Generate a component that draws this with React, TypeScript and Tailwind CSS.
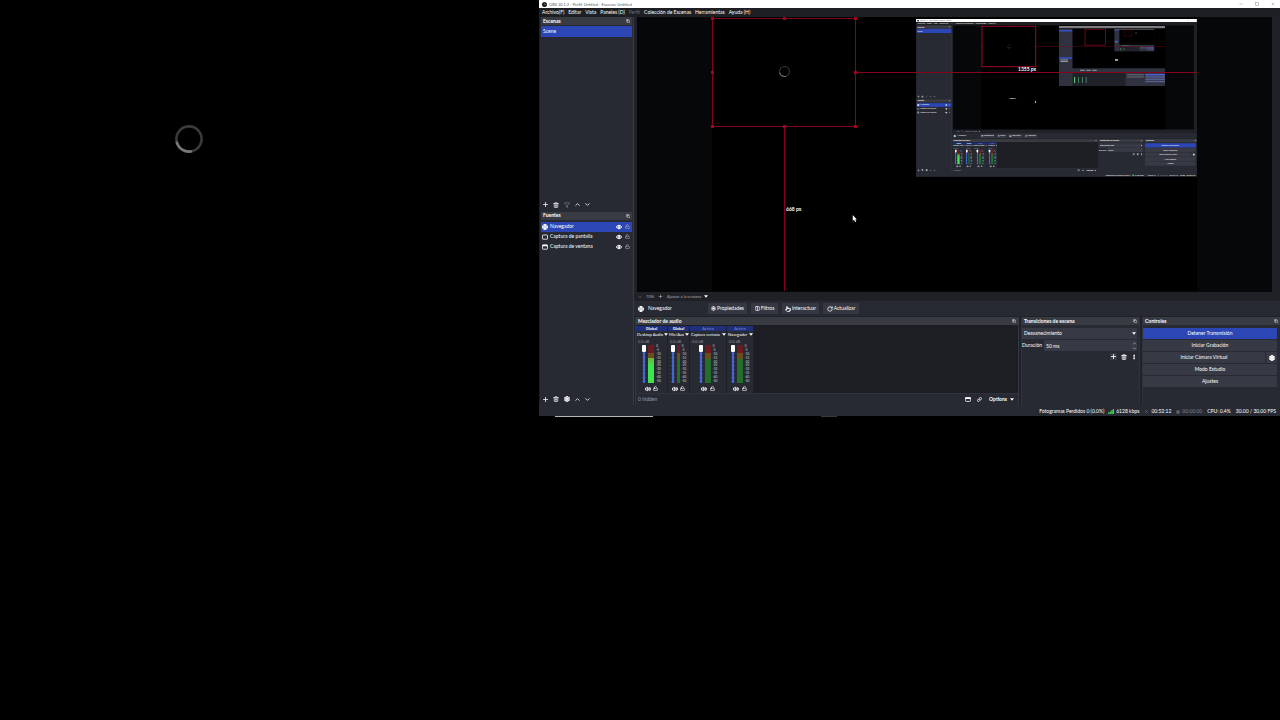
import {
  ChevronDown,
  ChevronUp,
  Columns2,
  Copy,
  Eye,
  Filter,
  Globe,
  Link,
  LockOpen,
  Minus,
  MoreVertical,
  Plus,
  Pointer,
  RotateCw,
  Settings,
  Square,
  Trash2,
  Volume2,
  X,
} from "lucide-react";
import type { ReactNode } from "react";

const menus = [
  "Archivo(F)",
  "Editar",
  "Vista",
  "Paneles (D)",
  "Perfil",
  "Colección de Escenas",
  "Herramientas",
  "Ayuda (H)",
];

const sources = [
  { name: "Navegador", kind: "browser", active: true },
  { name: "Captura de pantalla", kind: "display", active: false },
  { name: "Captura de ventana", kind: "window", active: false },
];

const channels = [
  { scope: "Global", name: "Desktop Audio", db: "0.0 dB", width: "w-8", meter: "w-[6px]", level: 72 },
  { scope: "Global", name: "Mic/Aux", db: "0.0 dB", width: "w-[22px]", meter: "w-[3px]", level: 0 },
  { scope: "Activo", name: "Captura ventana", db: "0.0 dB", width: "w-[37px]", meter: "w-[6px]", level: 0 },
  { scope: "Activo", name: "Navegador", db: "0.0 dB", width: "w-[27px]", meter: "w-[6px]", level: 0 },
];

const scale = ["0", "-5", "-10", "-15", "-20", "-25", "-30", "-35", "-40", "-50"];

function Spinner({ className }: { className: string }) {
  return (
    <svg viewBox="0 0 28 28" fill="none" strokeWidth="2.6" className={className}>
      <circle cx="14" cy="14" r="12.6" stroke="#3a3a3a" />
      <path d="M1.600 16.500A12.600 12.600 0 0 0 17 26.200" stroke="#777" />
    </svg>
  );
}

function DockHeader({ title }: { title: string }) {
  return (
    <div className="flex h-2 shrink-0 items-center justify-between bg-[#393b43] px-[2px]">
      <h2 className="font-bold text-white">{title}</h2>
      <button type="button" aria-label={`Desacoplar ${title}`}>
        <Copy size={4} strokeWidth={3} />
      </button>
    </div>
  );
}

function IconButton({ label, children }: { label: string; children: ReactNode }) {
  return (
    <button type="button" aria-label={label} className="flex size-[7px] items-center justify-center">
      {children}
    </button>
  );
}

function ListTools({ third }: { third: ReactNode }) {
  return (
    <div className="mt-auto flex h-3 items-center gap-[3px] px-px text-[#e4e5e8]">
      <IconButton label="Añadir">
        <Plus size={7} strokeWidth={3} />
      </IconButton>
      <IconButton label="Eliminar">
        <Trash2 size={6} strokeWidth={3} />
      </IconButton>
      <div className="mx-px flex">
        <IconButton label="Opciones">{third}</IconButton>
      </div>
      <IconButton label="Subir">
        <ChevronUp size={7} strokeWidth={3} />
      </IconButton>
      <IconButton label="Bajar">
        <ChevronDown size={7} strokeWidth={3} />
      </IconButton>
    </div>
  );
}

function SourceIcon({ kind }: { kind: string }) {
  if (kind === "browser") {
    return <Globe size={6} strokeWidth={4} />;
  }
  return (
    <svg viewBox="0 0 6 6" className="size-[6px]">
      <rect x="0.5" y="1" width="5" height="4.2" rx="0.5" fill="none" stroke="white" strokeWidth="0.8" />
      {kind === "window" && <rect x="0.5" y="0.7" width="5" height="1.6" fill="white" />}
    </svg>
  );
}

function LeftDocks() {
  return (
    <aside className="flex w-[95px] shrink-0 flex-col border-l border-r border-l-[#1e1f22] border-r-[#3a3c44] bg-[#272a33]">
      <section className="flex flex-1 flex-col px-px">
        <DockHeader title="Escenas" />
        <ul className="mt-px">
          <li className="flex h-[11px] items-center bg-[#2c46b5] px-[2px] text-white">Scene</li>
        </ul>
        <ListTools third={<Filter size={6} strokeWidth={2} color="#9a9ca3" />} />
      </section>
      <section className="flex flex-1 flex-col px-px pt-px">
        <DockHeader title="Fuentes" />
        <ul className="mt-[2px]">
          {sources.map((source) => (
            <li
              key={source.name}
              className={`flex h-[10px] items-center gap-[2px] px-px text-white ${source.active ? "bg-[#2c46b5]" : ""}`}
            >
              <SourceIcon kind={source.kind} />
              <span className="flex-1">{source.name}</span>
              <IconButton label={`Mostrar ${source.name}`}>
                <Eye size={6} strokeWidth={4} />
              </IconButton>
              <IconButton label={`Bloquear ${source.name}`}>
                <LockOpen size={5} strokeWidth={3} color="#a0a2aa" />
              </IconButton>
            </li>
          ))}
        </ul>
        <ListTools third={<Settings size={6} strokeWidth={5} />} />
      </section>
    </aside>
  );
}

// Text-free window for the captures that are too small to read.
function MiniWindow({ nested }: { nested: boolean }) {
  return (
    <div className="flex h-[158px] w-[280px] flex-col bg-[#30333f]">
      <div className="h-1 bg-[#c4c4c4]" />
      <div className="h-[3px] bg-[#25262b]" />
      <div className="flex flex-1">
        <div className="flex w-9 flex-col gap-[2px] pt-[3px]">
          <div className="h-1 bg-[#3450c8]" />
          <div className="mt-[66px] h-1 bg-[#3450c8]" />
          <div className="ml-1 h-[2px] w-5 bg-[#b9bac0]" />
          <div className="ml-1 h-[2px] w-5 bg-[#b9bac0]" />
        </div>
        <div className="flex flex-1 flex-col">
          <div className="flex h-[104px] justify-between bg-black pl-8 pr-7">
            <div className="h-11 w-[56px] border-2 border-[#8a0620]" />
            <div className="flex flex-col items-end">
              {nested && (
                <div className="h-[60px] w-[106px] overflow-hidden">
                  <div className="h-[158px] w-[280px] origin-top-left scale-[0.379]">
                    <MiniWindow nested={false} />
                  </div>
                </div>
              )}
              <div className="mr-[96px] mt-5 h-1 w-2 bg-[#d0d0d0]" />
            </div>
          </div>
          <div className="mt-1 flex gap-1 pl-5">
            <span className="h-[3px] w-3 bg-[#8d8f97]" />
            <span className="h-[3px] w-3 bg-[#8d8f97]" />
            <span className="h-[3px] w-3 bg-[#8d8f97]" />
          </div>
          <div className="mt-1 flex flex-1 gap-1">
            <div className="flex flex-1 gap-2 bg-[#202229] px-1 pt-3">
              <span className="h-4 w-[3px] bg-[#4fcf6a]" />
              <span className="h-4 w-[2px] bg-[#5c8f78]" />
              <span className="h-4 w-[2px] bg-[#5c8f78]" />
              <span className="h-4 w-[2px] bg-[#5c8f78]" />
            </div>
            <div className="flex w-11 flex-col gap-[2px] pt-1">
              <span className="h-1 bg-[#565966]" />
              <span className="h-1 bg-[#565966]" />
            </div>
            <div className="flex w-[52px] flex-col gap-[2px] pt-1">
              <span className="h-1 bg-[#4a62d8]" />
              <span className="h-1 bg-[#565e90]" />
              <span className="h-1 bg-[#565e90]" />
              <span className="h-1 bg-[#565e90]" />
            </div>
          </div>
        </div>
      </div>
    </div>
  );
}

const handles = [
  "-left-[2px] -top-[2px]",
  "left-[70px] -top-[2px]",
  "-right-[2px] -top-[2px]",
  "-left-[2px] top-[52px]",
  "-right-[2px] top-[52px]",
  "-left-[2px] -bottom-[2px]",
  "left-[70px] -bottom-[2px]",
  "-right-[2px] -bottom-[2px]",
];

// Free canvas: the selected browser source, its guides and the captured window.
function Preview({ depth }: { depth: number }) {
  return (
    <div className="flex h-[275px] justify-center overflow-hidden bg-[#050709]">
      <div className="relative h-[274px] w-[485px] bg-black">
        <div className="absolute right-0 top-[2px] h-[158px] w-[281px] overflow-hidden" inert>
          {depth === 0 ? (
            <div className="h-[416px] w-[741px] origin-top-left scale-[0.379]">
              <StudioWindow depth={depth + 1} />
            </div>
          ) : (
            <MiniWindow nested />
          )}
        </div>
        <div className={`absolute left-0 top-px h-[109px] w-36 ${depth === 0 ? "border border-[#85041c]" : "border-2 border-[#d00834]"}`}>
          {handles.map((place) => (
            <span key={place} className={`absolute size-[3px] bg-[#9c0620] ${place}`} />
          ))}
          <Spinner className="absolute left-[66px] top-[47px] size-[11px]" />
        </div>
        <div className="absolute left-36 right-0 top-[55px] h-px bg-[#85041c]" />
        {depth === 0 && <div className="absolute bottom-0 left-[72px] top-[110px] w-px bg-[#85041c]" />}
        {depth === 0 && <span className="absolute left-[306px] top-[49px] font-bold text-white">1355 px</span>}
        <span className="absolute left-[74px] top-[189px] font-bold text-white">668 px</span>
        <svg viewBox="0 0 8 12" className="absolute left-[140px] top-[198px] h-[7px] w-[5px]">
          <path d="M1 0v10l2.300-2 1.700 4 2-1-1.700-3.500H8z" fill="white" />
        </svg>
      </div>
    </div>
  );
}

function ToolButton({ icon, label, className }: { icon: ReactNode; label: string; className: string }) {
  return (
    <button
      type="button"
      className={`flex h-[11px] items-center justify-center gap-px rounded-[1px] bg-[#353842] text-white ${className}`}
    >
      {icon}
      {label}
    </button>
  );
}

function SourceBar() {
  return (
    <>
      <div className="flex h-[9px] items-center bg-[#202127] pl-[2px] text-[4px] text-[#a7a9b0]">
        <IconButton label="Alejar">
          <Minus size={4} />
        </IconButton>
        <span className="w-[14px] text-center">70%</span>
        <IconButton label="Acercar">
          <Plus size={5} strokeWidth={3} />
        </IconButton>
        <span className="ml-[3px] w-[37px] whitespace-nowrap">Ajustar a la ventana</span>
        <Caret />
      </div>
      <div className="flex h-[15px] items-center bg-[#272a33] pl-1 text-white">
        <Globe size={6} strokeWidth={4} />
        <span className="ml-1 w-[60px]">Navegador</span>
        <div className="flex gap-1">
          <ToolButton className="w-[39px]" label="Propiedades" icon={<Settings size={5} strokeWidth={4} />} />
          <ToolButton className="w-[27px]" label="Filtros" icon={<Columns2 size={5} strokeWidth={3} />} />
          <ToolButton className="w-[37px]" label="Interactuar" icon={<Pointer size={6} strokeWidth={3} />} />
          <ToolButton className="w-[36px]" label="Actualizar" icon={<RotateCw size={6} strokeWidth={3} />} />
        </div>
      </div>
    </>
  );
}

function Caret() {
  return (
    <svg viewBox="0 0 4 3" className="h-[3px] w-1 shrink-0">
      <path d="M0 0.300h4L2 2.800z" fill="white" />
    </svg>
  );
}

function Channel({ channel }: { channel: (typeof channels)[number] }) {
  return (
    <div className={`flex shrink-0 flex-col border-r border-[#1e2027] bg-[#272a33] ${channel.width}`}>
      <div
        className={`flex h-[5px] items-center justify-center bg-[#1f2f7c] text-[4px] ${channel.scope === "Global" ? "font-bold text-white" : "text-[#8391d6]"}`}
      >
        {channel.scope}
      </div>
      <button type="button" className="flex h-[7px] items-center justify-between gap-px whitespace-nowrap pl-px text-[4px] text-white">
        {channel.name}
        <Caret />
      </button>
      <span className="h-[7px] pl-[2px] text-[4px] text-[#8d8f97]">{channel.db}</span>
      <div className="flex h-[39px] justify-center gap-[2px]">
        <input
          type="range"
          aria-label={`Volumen ${channel.name}`}
          defaultValue={100}
          className="h-[38px] w-1 appearance-none bg-[linear-gradient(90deg,transparent_1px,#4565cf_1px,#4565cf_3px,transparent_3px),repeating-linear-gradient(#34478f_0_1px,transparent_1px_4px)] [direction:rtl] [writing-mode:vertical-lr] [&::-webkit-slider-thumb]:h-[7px] [&::-webkit-slider-thumb]:w-1 [&::-webkit-slider-thumb]:appearance-none [&::-webkit-slider-thumb]:rounded-[1px] [&::-webkit-slider-thumb]:bg-white"
        />
        <div
          className={`flex h-[38px] flex-col justify-end bg-[linear-gradient(#6b1c20_0_20%,#6d4a20_20%_36%,#256d2b_36%)] ${channel.meter}`}
        >
          <div className="bg-[linear-gradient(#6bb43b,#3fe34b_30%)]" style={{ height: `${channel.level * 0.9}%` }} />
        </div>
        <div className="flex h-[38px] flex-col justify-between text-[3px] leading-[3px] text-[#d4d5da]">
          {scale.map((mark) => (
            <span key={mark}>{mark}</span>
          ))}
        </div>
      </div>
      <div className="flex h-[9px] items-center justify-center gap-px text-white">
        <IconButton label={`Silenciar ${channel.name}`}>
          <Volume2 size={6} strokeWidth={4} />
        </IconButton>
        <IconButton label={`Bloquear volumen ${channel.name}`}>
          <LockOpen size={5} strokeWidth={3} />
        </IconButton>
      </div>
    </div>
  );
}

function Mixer() {
  return (
    <section className="flex min-w-0 flex-1 flex-col border-x border-[#353842] bg-[#272a33]">
      <DockHeader title="Mezclador de audio" />
      <div className="flex flex-1 bg-[#1d1e23] pt-px">
        {channels.map((channel) => (
          <Channel key={channel.name} channel={channel} />
        ))}
      </div>
      <div className="flex h-3 items-center justify-end gap-[5px] border-t border-[#30333d] pl-[2px] pr-1 text-white">
        <span className="mr-auto text-[#9c9ea6]">0 hidden</span>
        <IconButton label="Diseño">
          <svg viewBox="0 0 6 5" className="h-[5px] w-[6px]">
            <rect x="0.4" y="0.4" width="5.2" height="4" rx="0.8" fill="none" stroke="white" strokeWidth="0.8" />
            <rect x="0.4" y="0.4" width="5.2" height="1.6" fill="white" />
          </svg>
        </IconButton>
        <IconButton label="Propiedades avanzadas">
          <Link size={5} strokeWidth={4} />
        </IconButton>
        <button type="button" className="ml-px flex items-center gap-[3px] font-bold">
          Options
          <Caret />
        </button>
      </div>
    </section>
  );
}

function Transitions() {
  return (
    <section className="flex w-[119px] shrink-0 flex-col border-x border-[#30333d] bg-[#272a33]">
      <DockHeader title="Transiciones de escena" />
      <div className="flex flex-col gap-px pr-[2px] pt-[3px]">
        <div className="flex h-[11px] items-center bg-[#373a44] pl-[2px] pr-px">
          <select aria-label="Transición" className="flex-1 appearance-none bg-transparent text-white">
            <option>Desvanecimiento</option>
          </select>
          <Caret />
        </div>
        <label className="flex h-[11px] items-center gap-[2px] text-white">
          <span>Duración</span>
          <span className="flex h-full flex-1 items-center bg-[#373a44] pl-[2px]">
            <input defaultValue="50 ms" className="h-[9px] w-10 flex-1 bg-transparent outline-none" />
            <span className="flex flex-col">
              <ChevronUp size={5} />
              <ChevronDown size={5} />
            </span>
          </span>
        </label>
        <div className="flex h-[9px] items-center justify-end gap-[3px] text-white">
          <span className="bg-[#373a44]">
            <IconButton label="Añadir transición">
              <Plus size={7} strokeWidth={3} />
            </IconButton>
          </span>
          <IconButton label="Eliminar transición">
            <Trash2 size={6} strokeWidth={3} />
          </IconButton>
          <IconButton label="Más opciones">
            <MoreVertical size={6} strokeWidth={4} />
          </IconButton>
        </div>
      </div>
    </section>
  );
}

function Controls() {
  const button = "flex h-[11px] flex-1 items-center justify-center rounded-[1px] text-white";

  return (
    <section className="flex w-[138px] shrink-0 flex-col border-l border-[#30333d] bg-[#272a33]">
      <DockHeader title="Controles" />
      <div className="flex flex-col gap-px pr-[3px] pt-[3px]">
        <div className="flex">
          <button type="button" className={`${button} bg-[#2c46b5]`}>Detener Transmisión</button>
        </div>
        <div className="flex">
          <button type="button" className={`${button} bg-[#373a44]`}>Iniciar Grabación</button>
        </div>
        <div className="flex gap-px">
          <button type="button" className={`${button} bg-[#373a44]`}>Iniciar Cámara Virtual</button>
          <button
            type="button"
            aria-label="Configurar cámara virtual"
            className="flex h-[11px] w-[11px] items-center justify-center bg-[#373a44] text-white"
          >
            <Settings size={6} strokeWidth={5} />
          </button>
        </div>
        <div className="flex">
          <button type="button" className={`${button} bg-[#373a44]`}>Modo Estudio</button>
        </div>
        <div className="flex">
          <button type="button" className={`${button} bg-[#373a44]`}>Ajustes</button>
        </div>
      </div>
    </section>
  );
}

function StatusBar() {
  return (
    <footer className="flex h-[11px] items-center justify-end bg-[#272a33] pr-1 pt-[2px] text-white">
      <span>Fotogramas Perdidos 0 (0.0%)</span>
      <svg viewBox="0 0 6 5" className="ml-1 mr-[2px] h-[5px] w-[6px]" fill="#3fd34b">
        <path d="M0 3.500h1.300V5H0zM1.600 2.500h1.300V5H1.600zM3.200 1.300h1.300V5H3.200zM4.700 0H6v5H4.700z" />
      </svg>
      <span>6128 kbps</span>
      <X size={5} className="ml-[5px] mr-[2px] text-[#80838c]" />
      <span>00:52:12</span>
      <span className="ml-[5px] mr-[2px] size-1 rounded-full bg-[#5a5d66]" />
      <span className="text-[#7d8089]">00:00:00</span>
      <span className="ml-[5px]">CPU: 0.4%</span>
      <span className="ml-[5px]">30.00 / 30.00 FPS</span>
    </footer>
  );
}

function StudioWindow({ depth }: { depth: number }) {
  return (
    <div className="bg-[#272a33] font-['Lato',sans-serif] text-[5px] leading-[7px] text-[#e4e5e8]">
      <header className="flex h-2 items-center bg-white pl-[3px] pr-1 text-[4px] text-[#55575c]">
        <svg viewBox="0 0 6 6" className="mr-[2px] size-[5px]">
          <circle cx="3" cy="3" r="3" fill="#17181b" />
          <path d="M2 1.500a1 1 0 0 1 1 2M4.500 2.500a1 1 0 0 1-1.500 1" fill="none" stroke="#bbb" strokeWidth="0.500" />
        </svg>
        <span>OBS 30.1.2 - Perfil: Untitled - Escenas: Untitled</span>
        <div className="ml-auto flex gap-[9px]">
          <IconButton label="Minimizar">
            <Minus size={4} />
          </IconButton>
          <IconButton label="Maximizar">
            <Square size={4} />
          </IconButton>
          <IconButton label="Cerrar">
            <X size={4} />
          </IconButton>
        </div>
      </header>
      <nav className="flex h-[9px] items-center gap-1 bg-[#1e1f22] pl-[3px]">
        {menus.map((menu) => (
          <button key={menu} type="button" className={menu === "Perfil" ? "text-[#6b6d73]" : "text-white"}>
            {menu}
          </button>
        ))}
      </nav>
      <div className="flex h-[388px]">
        <LeftDocks />
        <main className="flex min-w-0 flex-1 flex-col">
          <div className="bg-[#202127] pl-[3px] pr-2">
            <Preview depth={depth} />
          </div>
          <SourceBar />
          <div className="flex flex-1 gap-[2px] bg-[#202229] pl-px pt-px">
            <Mixer />
            <Transitions />
            <Controls />
          </div>
        </main>
      </div>
      <StatusBar />
    </div>
  );
}

export default function App() {
  return (
    <div className="grid min-h-screen grid-cols-[539fr_741fr] bg-black">
      <div className="pl-[175px] pt-[125px]">
        <Spinner className="size-7" />
      </div>
      <div className="min-w-0">
        <StudioWindow depth={0} />
        <div className="flex pl-4">
          <span className="h-px w-[98px] bg-[#b5b6b8]" />
          <span className="ml-[168px] h-px w-4 bg-[#3a3a3a]" />
        </div>
      </div>
    </div>
  );
}
